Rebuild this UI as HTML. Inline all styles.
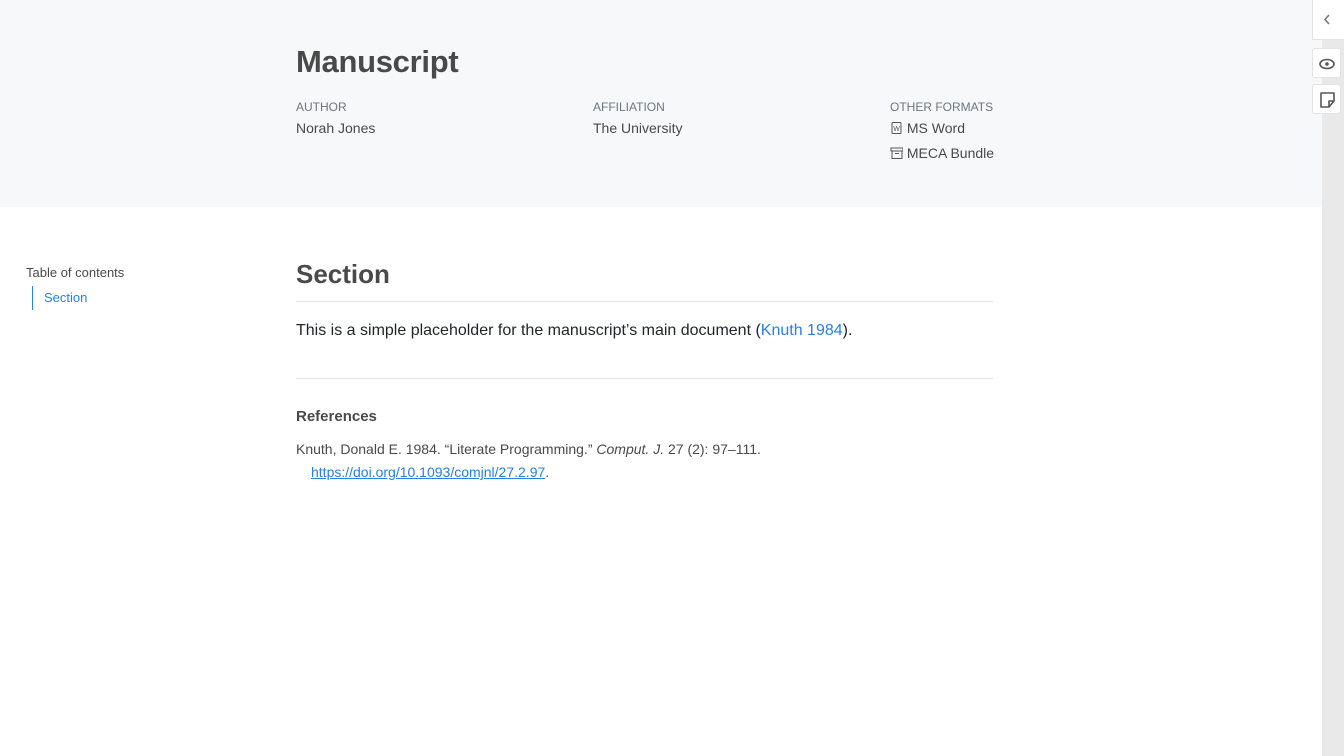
<!DOCTYPE html>
<html><head><meta charset="utf-8"><style>
*{margin:0;padding:0;box-sizing:border-box}
body{width:1344px;height:756px;overflow:hidden;background:#fff;font-family:"Liberation Sans",sans-serif;color:#343a40;position:relative}
.hdr{position:absolute;left:0;top:0;width:1322px;height:207px;background:#f7f8fa}
.strip{position:absolute;left:1322px;top:40px;width:22px;height:716px;background:#e9e9e9}
h1{position:absolute;left:296px;top:44px;font-size:31px;font-weight:bold;color:#494949;letter-spacing:-0.3px}
.lbl{position:absolute;top:100px;font-size:12px;color:#6c757d}
.val{position:absolute;font-size:14px;color:#494949}
.btn{position:absolute;background:#fff;border:1px solid #e3e3e3;border-radius:3px}
a{color:#2780e3;text-decoration:none}
</style></head><body>
<div class="hdr"></div>
<div class="strip"></div>
<div class="btn" style="left:1312px;top:0;width:32px;height:40px;border-radius:0;border-top:none;border-right:none"><svg width="32" height="40"><path d="M16 15l-4 4.5 4 4.5" fill="none" stroke="#777" stroke-width="1.6"/></svg></div>
<div class="btn" style="left:1312px;top:48px;width:29px;height:30px"><svg width="29" height="30"><ellipse cx="14" cy="15" rx="7" ry="4.5" fill="none" stroke="#555" stroke-width="1.6"/><circle cx="14" cy="15" r="1.8" fill="#555"/></svg></div>
<div class="btn" style="left:1312px;top:84px;width:29px;height:30px"><svg width="29" height="30"><path d="M8 8h13v8l-5 6h-8z M16 22v-6h5" fill="none" stroke="#555" stroke-width="1.6" stroke-linejoin="round"/></svg></div>
<h1>Manuscript</h1>
<div class="lbl" style="left:296px">AUTHOR</div>
<div class="lbl" style="left:593px">AFFILIATION</div>
<div class="lbl" style="left:890px">OTHER FORMATS</div>
<div class="val" style="left:296px;top:120px">Norah Jones</div>
<div class="val" style="left:593px;top:120px">The University</div>
<div class="val" style="left:890px;top:120px"><svg width="13" height="14" style="vertical-align:-2px"><rect x="2" y="1.5" width="9" height="11" rx="1" fill="none" stroke="#555"/><text x="6.5" y="10" font-size="7" text-anchor="middle" fill="#555" font-family="Liberation Sans">W</text></svg> MS Word</div>
<div class="val" style="left:890px;top:145px"><svg width="13" height="14" style="vertical-align:-2px"><rect x="1" y="2" width="12" height="3" fill="none" stroke="#555"/><rect x="2" y="5" width="10" height="7.5" fill="none" stroke="#555"/><path d="M5 7.5h4" stroke="#555"/></svg> MECA Bundle</div>
<div style="position:absolute;left:26px;top:265px;font-size:13px;color:#494949">Table of contents</div>
<div style="position:absolute;left:32px;top:286px;height:24px;border-left:1px solid #2780e3;padding:4px 0 0 11px;font-size:13px"><a>Section</a></div>
<div style="position:absolute;left:296px;top:259px;font-size:26px;font-weight:bold;color:#494949">Section</div>
<div style="position:absolute;left:296px;top:301px;width:697px;border-top:1px solid #dee2e6"></div>
<div style="position:absolute;left:296px;top:322px;font-size:16px;color:#212529">This is a simple placeholder for the manuscript’s main document (<a>Knuth 1984</a>).</div>
<div style="position:absolute;left:296px;top:378px;width:697px;border-top:1px solid #dee2e6"></div>
<div style="position:absolute;left:296px;top:408px;font-size:15px;font-weight:bold;color:#494949">References</div>
<div style="position:absolute;left:296px;top:438px;font-size:14px;color:#494949;line-height:23px">Knuth, Donald E. 1984. “Literate Programming.” <i>Comput. J.</i> 27 (2): 97–111.<br><span style="padding-left:15px"><a style="text-decoration:underline">https://doi.org/10.1093/comjnl/27.2.97</a>.</span></div>
</body></html>
